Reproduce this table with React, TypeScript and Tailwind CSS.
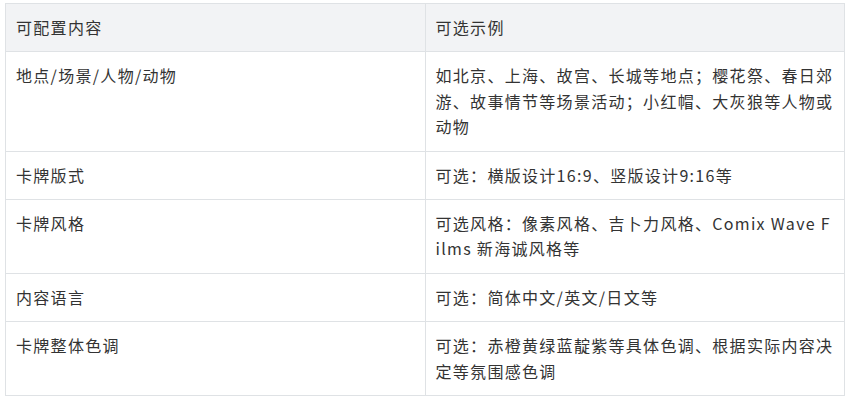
const rows: [string, string][] = [
  ["地点/场景/人物/动物", "如北京、上海、故宫、长城等地点；樱花祭、春日郊游、故事情节等场景活动；小红帽、大灰狼等人物或动物"],
  ["卡牌版式", "可选：横版设计16:9、竖版设计9:16等"],
  ["卡牌风格", "可选风格：像素风格、吉卜力风格、Comix Wave Films 新海诚风格等"],
  ["内容语言", "可选：简体中文/英文/日文等"],
  ["卡牌整体色调", "可选：赤橙黄绿蓝靛紫等具体色调、根据实际内容决定等氛围感色调"],
];

export default function App() {
  // 配置项表格
  return (
    <div
      className="w-[851px] h-[401px] bg-white pl-[5px] pt-[3px] text-[#333] text-[16px] tracking-[1.3px] leading-[25.4px]"
      style={{ fontFamily: '"Noto Sans CJK SC", "Noto Sans", sans-serif' }}
    >
      <table className="w-[840px] table-fixed border-collapse">
        <thead>
          <tr className="bg-[#f2f3f5]">
            <th className="w-1/2 border border-[#dfe2e5] px-[10px] py-[11px] text-left font-normal">可配置内容</th>
            <th className="w-1/2 border border-[#dfe2e5] px-[10px] py-[11px] text-left font-normal">可选示例</th>
          </tr>
        </thead>
        <tbody>
          {rows.map(([k, v]) => (
            <tr key={k}>
              <td className="border border-[#dfe2e5] px-[10px] py-[11px] align-top">{k}</td>
              <td className="border border-[#dfe2e5] px-[10px] py-[11px] align-top break-all">{v}</td>
            </tr>
          ))}
        </tbody>
      </table>
    </div>
  );
}
